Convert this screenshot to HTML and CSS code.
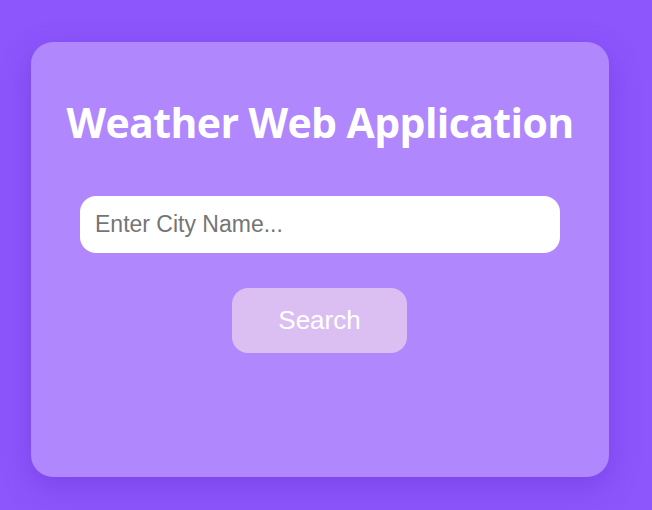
FILE: index.html
```html
<!DOCTYPE html>
<html>
<head>
<meta charset="utf-8">
<link rel="stylesheet" href="styles.css">
</head>
<body>
<div class="page">
  <div class="card">
    <h1 class="title">Weather Web Application</h1>
    <input class="city" type="text" placeholder="Enter City Name...">
    <button class="search">Search</button>
  </div>
</div>
</body>
</html>
```
FILE: styles.css
```css
html, body {
  margin: 0;
  padding: 0;
}
body {
  background: #8d55fc;
  width: 652px;
  height: 510px;
  overflow: hidden;
}
.page {
  padding: 42px 43px 0 31px;
}
.card {
  box-sizing: border-box;
  width: 578px;
  height: 435px;
  background: #b087fd;
  border-radius: 22px;
  box-shadow: 0 10px 30px rgba(90, 40, 200, 0.35);
  display: flex;
  flex-direction: column;
  align-items: center;
  padding-top: 52px;
}
.title {
  margin: 0;
  font-family: "Open Sans", sans-serif;
  font-weight: 700;
  font-size: 41px;
  line-height: 56px;
  color: #ffffff;
  letter-spacing: -0.6px;
}
.city {
  box-sizing: border-box;
  margin-top: 46px;
  width: 480px;
  height: 57px;
  border: none;
  outline: none;
  border-radius: 16px;
  background: #ffffff;
  padding: 0 15px;
  font-family: "Liberation Sans", Arial, sans-serif;
  font-size: 23px;
  color: #333;
}
.city::placeholder {
  color: #757575;
}
.search {
  box-sizing: border-box;
  margin-top: 35px;
  margin-right: 1px;
  width: 175px;
  height: 65px;
  border: none;
  border-radius: 16px;
  background: #dcbff2;
  color: #ffffff;
  font-family: "Liberation Sans", Arial, sans-serif;
  font-size: 26px;
}
```
